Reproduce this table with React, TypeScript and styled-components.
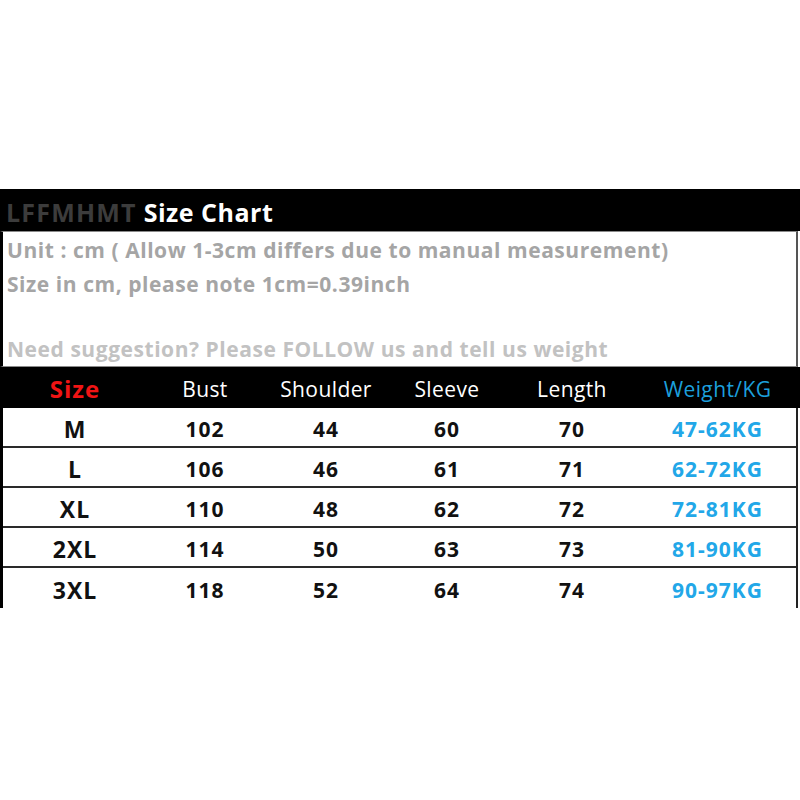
import React from "react";
import styled, { createGlobalStyle } from "styled-components";

const Global = createGlobalStyle`
  html, body { margin: 0; padding: 0; background: #fff; }
  body { font-family: "Open Sans", Lato, sans-serif; }
`;

const Page = styled.div`
  width: 800px;
  height: 800px;
  padding-top: 189px;
  box-sizing: border-box;
  background: #fff;
`;

const TitleBar = styled.div`
  height: 42px;
  background: #000;
  display: flex;
  align-items: center;
  padding: 3px 0 0 6px;
  box-sizing: border-box;
  font-size: 25px;
  font-weight: 700;
  white-space: pre;
`;

const Brand = styled.span`
  color: #3c3c3c;
  letter-spacing: 1.2px;
`;

const TitleText = styled.span`
  color: #fff;
  letter-spacing: 0.5px;
`;

const InfoBox = styled.div`
  height: 136px;
  margin-right: 2px;
  box-sizing: border-box;
  border-left: 3px solid #000;
  border-right: 2px solid #555;
  border-top: 1px solid #8a8a8a;
  border-bottom: 1px solid #8a8a8a;
  padding: 1px 0 0 4px;
  display: flex;
  flex-direction: column;
`;

const InfoLine = styled.div<{ $light?: boolean }>`
  height: 34px;
  line-height: 34px;
  font-size: 21px;
  letter-spacing: 0.55px;
  font-weight: 700;
  color: ${(p) => (p.$light ? "#c2c2c2" : "#a5a5a5")};
  white-space: nowrap;
`;

const cols = "144px 116px 126px 116px 134px 157px";

const HeadRow = styled.div`
  height: 41px;
  background: #000;
  display: grid;
  grid-template-columns: 3px ${cols};
  align-items: center;
`;

const HeadCell = styled.div<{ $color?: string; $bold?: boolean }>`
  text-align: center;
  font-size: ${(p) => (p.$bold ? 24 : 21)}px;
  letter-spacing: ${(p) => (p.$bold ? 1 : 0.4)}px;
  font-weight: ${(p) => (p.$bold ? 700 : 400)};
  color: ${(p) => p.$color || "#fff"};
  padding-top: 2px;
`;

const Body = styled.div`
  margin-right: 2px;
  border-left: 3px solid #000;
  border-right: 2px solid #222;
`;

const Row = styled.div<{ $last?: boolean }>`
  height: 40px;
  box-sizing: border-box;
  display: grid;
  grid-template-columns: ${cols};
  align-items: center;
  border-bottom: ${(p) => (p.$last ? "none" : "2px solid #2a2a2a")};
`;

const Cell = styled.div<{ $size?: number; $color?: string }>`
  text-align: center;
  font-weight: 700;
  font-size: ${(p) => p.$size || 21}px;
  letter-spacing: 1px;
  color: ${(p) => p.$color || "#111"};
  padding-top: 3px;
`;

const Spacer = styled.div``;

const rows = [
  ["M", "102", "44", "60", "70", "47-62KG"],
  ["L", "106", "46", "61", "71", "62-72KG"],
  ["XL", "110", "48", "62", "72", "72-81KG"],
  ["2XL", "114", "50", "63", "73", "81-90KG"],
  ["3XL", "118", "52", "64", "74", "90-97KG"],
];

export default function App() {
  return (
    <>
      <Global />
      <Page>
        <TitleBar>
          <Brand>LFFMHMT</Brand>
          <TitleText> Size Chart</TitleText>
        </TitleBar>
        <InfoBox>
          <InfoLine>Unit : cm ( Allow 1-3cm differs due to manual measurement)</InfoLine>
          <InfoLine>Size in cm, please note 1cm=0.39inch</InfoLine>
          <InfoLine />
          <InfoLine $light>Need suggestion? Please FOLLOW us and tell us weight</InfoLine>
        </InfoBox>
        <HeadRow>
          <Spacer />
          <HeadCell $color="#f01414" $bold>Size</HeadCell>
          <HeadCell>Bust</HeadCell>
          <HeadCell>Shoulder</HeadCell>
          <HeadCell>Sleeve</HeadCell>
          <HeadCell>Length</HeadCell>
          <HeadCell $color="#1c9fdc">Weight/KG</HeadCell>
        </HeadRow>
        <Body>
          {rows.map((r, i) => (
            <Row key={r[0]} $last={i === rows.length - 1}>
              <Cell $size={23}>{r[0]}</Cell>
              <Cell>{r[1]}</Cell>
              <Cell>{r[2]}</Cell>
              <Cell>{r[3]}</Cell>
              <Cell>{r[4]}</Cell>
              <Cell $color="#22a7e8">{r[5]}</Cell>
            </Row>
          ))}
        </Body>
      </Page>
    </>
  );
}
